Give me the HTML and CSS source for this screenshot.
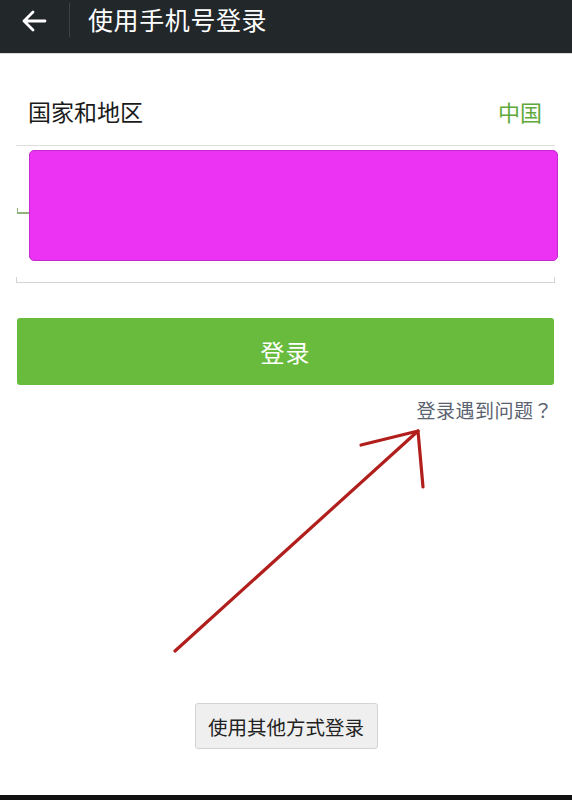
FILE: index.html
```html
<!DOCTYPE html>
<html lang="zh-CN">
<head>
<meta charset="utf-8">
<title>使用手机号登录</title>
<link rel="stylesheet" href="styles.css">
</head>
<body>
<div class="page">
  <header class="topbar">
    <span class="back">
      <svg width="26" height="22" viewBox="0 0 26 22"><path d="M24 11H3M12 2L3 11l9 9" fill="none" stroke="#fff" stroke-width="2.8" stroke-linecap="round" stroke-linejoin="round"/></svg>
    </span>
    <span class="divider"></span>
    <h1 class="title">使用手机号登录</h1>
  </header>

  <div class="row-country">
    <span class="label">国家和地区</span>
    <span class="value">中国</span>
  </div>

  <div class="phone-field">
    <span class="prefix-mark"></span>
    <div class="redact"></div>
  </div>

  <button class="btn-login">登录</button>
  <div class="help"><span>登录遇到问题<span class="qmark" lang="zh-TW">？</span></span></div>

  <div class="other-wrap"><button class="btn-other">使用其他方式登录</button></div>

  <div class="bottom-bar"></div>

  <svg class="arrow" width="572" height="800" viewBox="0 0 572 800">
    <g fill="none" stroke="#b11f1c" stroke-width="3.2" stroke-linecap="round" stroke-linejoin="round">
      <path d="M175 651L418 431"/>
      <path d="M361 445L418 431L423 487"/>
    </g>
  </svg>
</div>
</body>
</html>
```

FILE: styles.css
```css
* { box-sizing: border-box; }
html, body { margin: 0; padding: 0; background: #fff; }
body { font-family: "Noto Sans CJK SC", "Noto Sans", sans-serif; }
.page { position: relative; width: 572px; height: 800px; overflow: hidden; display: flex; flex-direction: column; }

.topbar { height: 54px; background: #22272a; border-bottom: 1px solid #d9d9d9; display: flex; align-items: flex-start; flex-shrink: 0; }
.back { width: 69px; height: 40px; display: flex; align-items: center; padding-left: 21px; padding-top: 2px; }
.divider { width: 1px; height: 34px; margin-top: 3px; background: #3c4245; }
.title { margin: 0 0 0 18px; font-size: 25px; line-height: 39px; font-weight: 400; color: #fff; letter-spacing: 0.6px; }

.row-country { margin: 0 17px 0 16px; padding: 45px 13px 22px 12px; border-bottom: 1px solid #dedede; display: flex; justify-content: space-between; align-items: center; height: 92px; }
.label { font-size: 23px; line-height: 24px; color: #1a1a1a; }
.value { font-size: 22px; line-height: 24px; color: #5ea93a; }

.phone-field { position: relative; margin: 0 17px 0 16px; height: 137px; border-bottom: 1px solid #d4d4d4; }
.phone-field::before, .phone-field::after { content: ""; position: absolute; bottom: -1px; width: 1px; height: 6px; background: #d4d4d4; }
.phone-field::before { left: 0; }
.phone-field::after { right: 0; }
.prefix-mark { position: absolute; left: 1px; top: 62px; width: 13px; height: 6px; border-left: 1px solid #8fb57a; border-bottom: 2px solid #8fb57a; }
.redact { position: absolute; left: 13px; top: 4px; width: 529px; height: 111px; background: #ec33f4; border: 1px solid #c42bcf; border-radius: 5px; }

.btn-login { margin: 35px 18px 0 17px; height: 67px; border: none; border-radius: 3px; background: #68bb3c; color: #fff; font-family: inherit; font-size: 24px; letter-spacing: 1px; }

.help { display: flex; justify-content: flex-end; padding-right: 19px; margin-top: 13px; }
.help > span { font-size: 19px; line-height: 24px; color: #5a6270; letter-spacing: 0.5px; }
.qmark { font-family: "Noto Sans CJK TC", "Noto Sans CJK SC", sans-serif; }

.other-wrap { display: flex; justify-content: center; margin-top: 281px; }
.btn-other { width: 183px; height: 46px; background: #efefef; border: 1px solid #d3d3d3; border-radius: 3px; font-family: inherit; font-size: 19.5px; color: #222; padding: 0; }

.bottom-bar { margin-top: auto; height: 5px; background: #111; }

.arrow { position: absolute; left: 0; top: 0; pointer-events: none; }
```
